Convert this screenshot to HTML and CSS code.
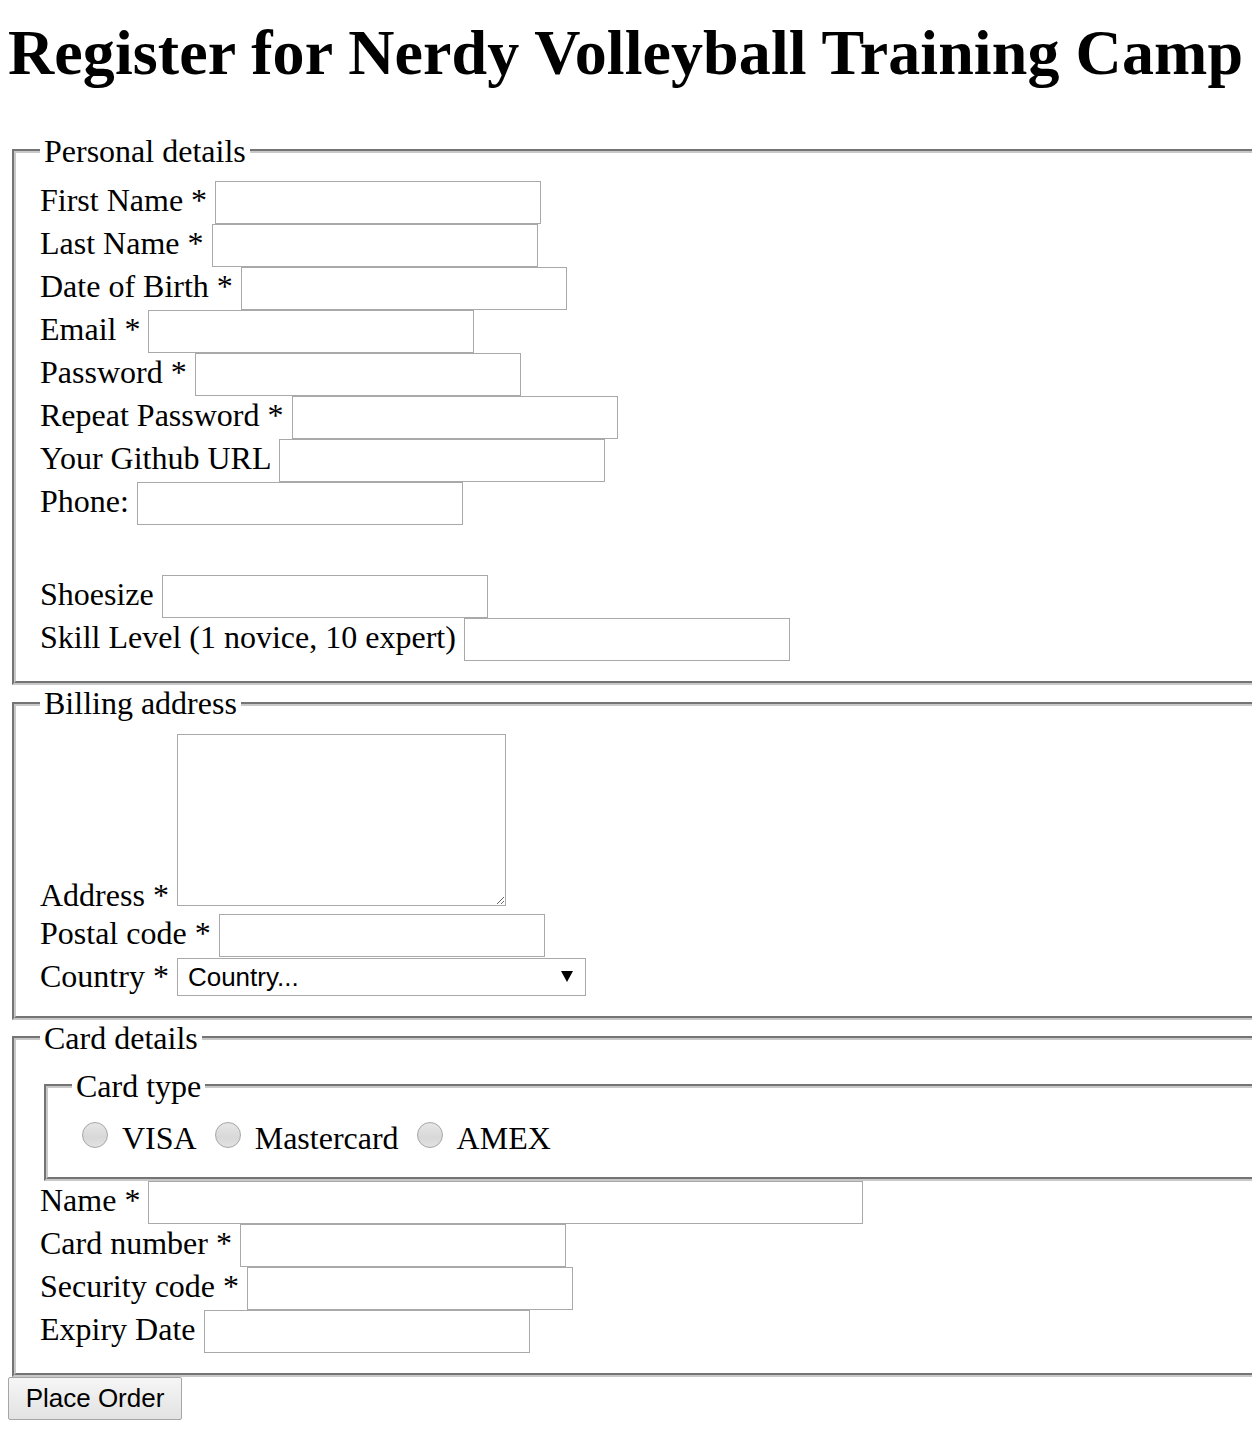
FILE: index.html
```html
<!DOCTYPE html>
<html lang="en">
<head>
<meta charset="utf-8">
<title>Register for Nerdy Volleyball Training Camp</title>
<link rel="stylesheet" href="styles.css">
</head>
<body>
<h1 class="title">Register for Nerdy Volleyball Training Camp</h1>
<form class="form">
  <fieldset class="group">
    <legend class="group-title">Personal details</legend>
    <div class="row"><label class="label" for="first">First Name *</label><input class="field" id="first" type="text"></div>
    <div class="row"><label class="label" for="last">Last Name *</label><input class="field" id="last" type="text"></div>
    <div class="row"><label class="label" for="dob">Date of Birth *</label><input class="field" id="dob" type="text"></div>
    <div class="row"><label class="label" for="email">Email *</label><input class="field" id="email" type="text"></div>
    <div class="row"><label class="label" for="pw">Password *</label><input class="field" id="pw" type="password"></div>
    <div class="row"><label class="label" for="pw2">Repeat Password *</label><input class="field" id="pw2" type="password"></div>
    <div class="row"><label class="label" for="gh">Your Github URL</label><input class="field" id="gh" type="text"></div>
    <div class="row"><label class="label" for="phone">Phone:</label><input class="field" id="phone" type="text"></div>
    <div class="row row-spaced"><label class="label" for="shoe">Shoesize</label><input class="field" id="shoe" type="text"></div>
    <div class="row"><label class="label" for="skill">Skill Level (1 novice, 10 expert)</label><input class="field" id="skill" type="text"></div>
  </fieldset>
  <fieldset class="group">
    <legend class="group-title">Billing address</legend>
    <div class="row row-bottom"><label class="label" for="addr">Address *</label><textarea class="area" id="addr"></textarea></div>
    <div class="row"><label class="label" for="postal">Postal code *</label><input class="field" id="postal" type="text"></div>
    <div class="row"><label class="label" for="country">Country *</label><span class="select-wrap"><select class="select" id="country"><option>Country...</option></select></span></div>
  </fieldset>
  <fieldset class="group">
    <legend class="group-title">Card details</legend>
    <fieldset class="group group-inner">
      <legend class="group-title">Card type</legend>
      <div class="choices">
        <input class="radio" type="radio" name="card" id="visa"><label class="choice-text" for="visa">VISA</label>
        <input class="radio" type="radio" name="card" id="mc"><label class="choice-text" for="mc">Mastercard</label>
        <input class="radio" type="radio" name="card" id="amex"><label class="choice-text" for="amex">AMEX</label>
      </div>
    </fieldset>
    <div class="row"><label class="label" for="cname">Name *</label><input class="field field-wide" id="cname" type="text"></div>
    <div class="row"><label class="label" for="cnum">Card number *</label><input class="field" id="cnum" type="text"></div>
    <div class="row"><label class="label" for="csc">Security code *</label><input class="field" id="csc" type="text"></div>
    <div class="row"><label class="label" for="exp">Expiry Date</label><input class="field" id="exp" type="text"></div>
  </fieldset>
  <button class="submit" type="submit">Place Order</button>
</form>
</body>
</html>
```

FILE: styles.css
```css
html {
  overflow: hidden;
}

body {
  margin: 8px;
  font-family: "Liberation Serif", "Times New Roman", serif;
  font-size: 32px;
  color: #000;
  background: #fff;
}

.title {
  margin: 8px 0 42.88px;
  font-size: 64px;
  font-weight: bold;
  line-height: normal;
  letter-spacing: 0.1px;
  white-space: nowrap;
}

.form {
  margin: 0 -8px 0 0;
}

.group {
  margin: 0 0 0 4px;
  padding: 11.2px 24px 20px;
  border: 4px groove #c8c8c8;
  border-right-width: 0;
  min-width: 0;
}

.group-inner {
  margin: 0 -24px 0 4px;
}

.group-title {
  padding: 0 4px;
  margin-left: 0;
  font-size: 32px;
  line-height: normal;
}

.row {
  display: flex;
  align-items: flex-start;
  column-gap: 8px;
}

.row-spaced {
  margin-top: 50.4px;
}

.row-bottom {
  align-items: flex-end;
}

.label {
  padding-top: 1px;
  white-space: nowrap;
  line-height: normal;
}

.row-bottom .label {
  padding-top: 0;
}

.field {
  box-sizing: border-box;
  width: 326px;
  height: 43px;
  margin: 0;
  padding: 0 4px;
  border: 1px solid #a9a9a9;
  background: #fff;
  font: 26px "Liberation Sans", Arial, sans-serif;
}

.field-wide {
  width: 715px;
}

.area {
  box-sizing: border-box;
  width: 329px;
  height: 172px;
  margin: 0 0 8px;
  padding: 2px;
  border: 1px solid #a9a9a9;
  font: 26px "Liberation Mono", monospace;
}

.select-wrap {
  position: relative;
  display: block;
  margin-top: 1px;
}

.select-wrap::after {
  content: "";
  position: absolute;
  right: 13px;
  top: 13px;
  border-left: 6px solid transparent;
  border-right: 6px solid transparent;
  border-top: 11px solid #000;
  pointer-events: none;
}

.select {
  -webkit-appearance: none;
  appearance: none;
  box-sizing: border-box;
  display: block;
  width: 409px;
  height: 38px;
  margin: 0;
  padding: 0 0 0 10px;
  border: 1px solid #a9a9a9;
  border-radius: 0;
  background: #fff;
  color: #000;
  font: 26px "Liberation Sans", Arial, sans-serif;
}

.choices {
  display: flex;
  align-items: flex-start;
}

.radio {
  -webkit-appearance: none;
  appearance: none;
  box-sizing: border-box;
  width: 26px;
  height: 26px;
  margin: 6px 6px 0 10px;
  border: 1px solid #a6a6a6;
  border-radius: 50%;
  background: linear-gradient(#e6e6e6, #d8d8d8 60%, #e2e2e2);
}

.choice-text {
  margin: 0 8px;
  padding-top: 4px;
  padding-bottom: 1px;
  line-height: 36px;
}

.submit {
  box-sizing: border-box;
  display: block;
  width: 174px;
  height: 43px;
  margin: 0;
  padding: 0;
  border: 1px solid #a6a6a6;
  border-radius: 2px;
  background: linear-gradient(#f6f6f6, #e2e2e2);
  color: #000;
  font: 26px "Liberation Sans", Arial, sans-serif;
}
```
